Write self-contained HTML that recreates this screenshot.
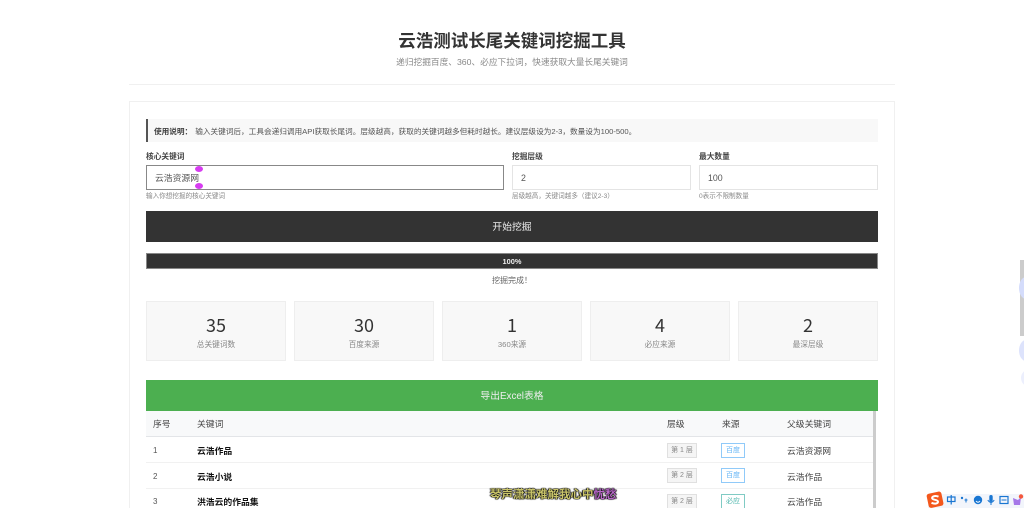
<!DOCTYPE html>
<html lang="zh-CN">
<head>
<meta charset="utf-8">
<title>云浩测试长尾关键词挖掘工具</title>
<style>
html,body{margin:0;padding:0;background:#fff;overflow:hidden;width:1024px;height:508px;}
#w{position:relative;width:1024px;height:508px;overflow:hidden;font-family:"Liberation Sans","Noto Sans CJK SC",sans-serif;color:#333;}
.a{position:absolute;white-space:nowrap;}
.b{position:absolute;box-sizing:border-box;}
.c{text-align:center;transform:translateX(-50%);}
.lb{font-size:7.7px;font-weight:bold;color:#444;line-height:12px;}
.hint{font-size:6.6px;color:#888;line-height:10px;}
.inp{background:#fff;border:1px solid #e4e4e4;height:25px;top:165px;}
.val{font-size:8.8px;color:#555;line-height:14px;top:171px;}
.st{background:#f8f8f8;border:1px solid #eee;top:301px;height:60px;width:140px;}
.num{font-family:"Noto Sans CJK SC",sans-serif;font-size:18px;color:#333;line-height:24px;top:313px;}
.sl{font-size:7.7px;color:#888;line-height:12px;top:339px;}
.th{font-size:8.8px;color:#444;line-height:14px;top:417px;}
.td{font-size:8.8px;color:#444;line-height:14px;}
.kw{font-size:8.8px;color:#111;font-weight:bold;line-height:14px;left:197px;}
.no{font-size:8px;color:#555;line-height:12px;left:153px;}
.lv{left:667px;width:30px;height:15px;background:#f5f5f5;border:1px solid #e0e0e0;font-size:7px;color:#888;line-height:13px;text-align:center;}
.src{left:721px;width:24px;height:15px;background:#fff;font-size:7px;line-height:13px;text-align:center;}
.line{left:146px;width:727px;height:1px;background:#f1f1f1;}
</style>
</head>
<body>
<div id="w">
<div class="a c" style="left:512px;top:28px;font-size:17.5px;font-weight:bold;color:#333;line-height:26px;">云浩测试长尾关键词挖掘工具</div>
<div class="a c" style="left:512px;top:56px;font-size:8.7px;color:#888;line-height:13px;">递归挖掘百度、360、必应下拉词&#xFF0C;快速获取大量长尾关键词</div>
<div class="b" style="left:129px;top:84px;width:766px;height:1px;background:#f0f0f0;"></div>

<div class="b" style="left:129px;top:101px;width:766px;height:420px;border:1px solid #f0f0f0;background:#fff;"></div>

<div class="b" style="left:146px;top:119px;width:732px;height:23px;background:#f8f8f8;border-left:2px solid #555;"></div>
<div class="a" style="left:154px;top:126px;font-size:7.65px;line-height:12px;color:#555;"><b style="color:#444;">使用说明&#xFF1A;</b><span style="margin-left:3px;">输入关键词后&#xFF0C;工具会递归调用API获取长尾词。层级越高&#xFF0C;获取的关键词越多但耗时越长。建议层级设为2-3&#xFF0C;数量设为100-500。</span></div>

<div class="a lb" style="left:146px;top:151px;">核心关键词</div>
<div class="b inp" style="left:146px;width:358px;border-color:#888;"></div>
<div class="a val" style="left:155px;">云浩资源网</div>
<div class="b" style="left:195px;top:166px;width:8px;height:6px;border-radius:50%;background:#d63cf0;"></div>
<div class="b" style="left:195px;top:183px;width:8px;height:6px;border-radius:50%;background:#d63cf0;"></div>
<div class="a hint" style="left:146px;top:192px;">输入你想挖掘的核心关键词</div>

<div class="a lb" style="left:512px;top:151px;">挖掘层级</div>
<div class="b inp" style="left:512px;width:179px;"></div>
<div class="a val" style="left:521px;">2</div>
<div class="a hint" style="left:512px;top:192px;">层级越高&#xFF0C;关键词越多&#xFF08;建议2-3&#xFF09;</div>

<div class="a lb" style="left:699px;top:151px;">最大数量</div>
<div class="b inp" style="left:699px;width:179px;"></div>
<div class="a val" style="left:708px;">100</div>
<div class="a hint" style="left:699px;top:192px;">0表示不限制数量</div>

<div class="b" style="left:146px;top:211px;width:732px;height:31px;background:#333;"></div>
<div class="a c" style="left:512px;top:221px;font-size:9.8px;color:#eee;line-height:14px;">开始挖掘</div>

<div class="b" style="left:146px;top:253px;width:732px;height:16px;background:#333;border:1px solid #888;"></div>
<div class="a c" style="left:512px;top:256px;font-size:7.4px;font-weight:bold;color:#eee;line-height:11px;">100%</div>
<div class="a c" style="left:512px;top:275px;font-size:8px;color:#666;line-height:11px;">挖掘完成&#xFF01;</div>

<div class="b st" style="left:146px;"></div>
<div class="b st" style="left:294px;"></div>
<div class="b st" style="left:442px;"></div>
<div class="b st" style="left:590px;"></div>
<div class="b st" style="left:738px;"></div>
<div class="a c num" style="left:216px;">35</div><div class="a c sl" style="left:216px;">总关键词数</div>
<div class="a c num" style="left:364px;">30</div><div class="a c sl" style="left:364px;">百度来源</div>
<div class="a c num" style="left:512px;">1</div><div class="a c sl" style="left:512px;">360来源</div>
<div class="a c num" style="left:660px;">4</div><div class="a c sl" style="left:660px;">必应来源</div>
<div class="a c num" style="left:808px;">2</div><div class="a c sl" style="left:808px;">最深层级</div>

<div class="b" style="left:146px;top:380px;width:732px;height:31px;background:#4caf50;"></div>
<div class="a c" style="left:512px;top:390px;font-size:9.8px;color:#eee;line-height:14px;">导出Excel表格</div>

<div class="b" style="left:146px;top:411px;width:727px;height:26px;background:#f8f9fa;border-bottom:1px solid #e3e5e8;"></div>
<div class="b" style="left:873px;top:411px;width:3px;height:97px;background:#ccc;"></div>
<div class="a th" style="left:153px;">序号</div>
<div class="a th" style="left:197px;">关键词</div>
<div class="a th" style="left:667px;">层级</div>
<div class="a th" style="left:722px;">来源</div>
<div class="a th" style="left:787px;">父级关键词</div>

<div class="a no" style="top:445px;">1</div>
<div class="a kw" style="top:444px;">云浩作品</div>
<div class="b lv" style="top:443px;">第 1 层</div>
<div class="b src" style="top:443px;border:1px solid #90caf9;color:#64b5f6;">百度</div>
<div class="a td" style="left:787px;top:444px;">云浩资源网</div>
<div class="b line" style="top:462px;"></div>

<div class="a no" style="top:471px;">2</div>
<div class="a kw" style="top:470px;">云浩小说</div>
<div class="b lv" style="top:468px;">第 2 层</div>
<div class="b src" style="top:468px;border:1px solid #90caf9;color:#64b5f6;">百度</div>
<div class="a td" style="left:787px;top:470px;">云浩作品</div>
<div class="b line" style="top:488px;"></div>

<div class="a no" style="top:496px;">3</div>
<div class="a kw" style="top:495px;">洪浩云的作品集</div>
<div class="b lv" style="top:494px;">第 2 层</div>
<div class="b src" style="top:494px;border:1px solid #80cbc4;color:#4db6ac;">必应</div>
<div class="a td" style="left:787px;top:495px;">云浩作品</div>

<div class="a" style="left:490px;top:488px;font-size:11.5px;font-weight:bold;line-height:14px;color:#c9c46a;text-shadow:0 0 1px #000,0 0 1px #000,1px 0 1px #222,-1px 0 1px #222;">琴声潇潇难解我心中<span style="color:#b868c8;">忧愁</span></div>

<div class="b" style="left:1020px;top:260px;width:4px;height:76px;background:#ccc;"></div>
<div class="b" style="left:1019px;top:277px;width:14px;height:22px;border-radius:50%;background:#d4dcfb;"></div>
<div class="b" style="left:1019px;top:340px;width:14px;height:21px;border-radius:50%;background:#dde3fc;"></div>
<div class="b" style="left:1021px;top:370px;width:14px;height:16px;border-radius:50%;background:#eceffd;"></div>

<div class="b" style="left:928px;top:494px;width:96px;height:14px;background:#f2f5fb;"></div>
<svg class="b" style="left:925px;top:490px;" width="99" height="18" viewBox="0 0 99 18">
<rect x="2.500" y="2.500" width="15" height="14.500" rx="2.500" fill="#f4581c" transform="rotate(-12 10 9.500)"/>
<path d="M13.500 6.700C11 5.500 7.300 5.900 7.100 8C6.900 10.300 13.200 9.300 13 11.800C12.800 13.900 9 14.100 6.500 12.800" fill="none" stroke="#fff" stroke-width="2"/>
<rect x="22.500" y="7" width="7.500" height="4.500" fill="none" stroke="#1976d2" stroke-width="1.200"/>
<path d="M26.200 5V14.500" stroke="#1976d2" stroke-width="1.200"/>
<circle cx="37" cy="8" r="1.200" fill="#1976d2"/>
<path d="M41 8.500V12.500M39.500 10H42.500" stroke="#1976d2" stroke-width="1"/>
<circle cx="53" cy="10" r="4.200" fill="#1976d2"/>
<path d="M51 11Q53 13.500 55 11" stroke="#fff" stroke-width="1" fill="none"/>
<rect x="64.300" y="5" width="3.400" height="7" rx="1.700" fill="#1976d2"/>
<path d="M62.800 10Q66 15 69.200 10M66 12.500V15" stroke="#1976d2" stroke-width="1" fill="none"/>
<rect x="75" y="6.500" width="8" height="7" fill="none" stroke="#1976d2" stroke-width="1.200"/>
<path d="M76.500 10H81.500" stroke="#1976d2" stroke-width="1"/>
<path d="M88 8L93 10L96 7L95 15H89Z" fill="#a678e8"/>
<circle cx="96" cy="6.500" r="2.200" fill="#f4583c"/>
</svg>
</div>
</body>
</html>
